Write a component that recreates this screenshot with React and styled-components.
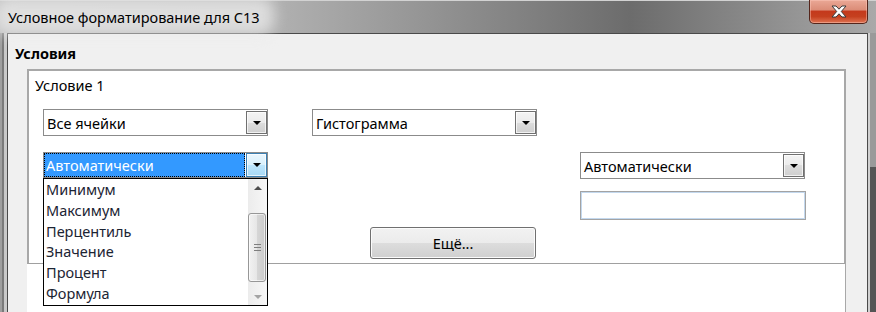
import React from 'react';
import styled, { createGlobalStyle } from 'styled-components';

// GLOBAL
const GlobalStyle = createGlobalStyle`
  html, body {
    margin: 0;
    padding: 0;
    background: #6d6d6d;
  }
  body {
    font-family: "Noto Sans", "Open Sans", sans-serif;
    font-size: 14.5px;
    color: #000;
  }
  * {
    box-sizing: border-box;
  }
`

// WINDOW CHROME
const Window = styled.div`
  width: 876px;
  height: 312px;
  overflow: hidden;
  display: flex;
  flex-direction: column;
`
const TitleBar = styled.div`
  height: 33px;
  flex: none;
  display: flex;
  align-items: flex-start;
  border-top: 1px solid #d2d2d2;
  background: linear-gradient(90deg, #bcbcbc 0%, #b3b3b3 30%, #929292 50%, #6c6c6c 72%, #8a8a8a 86%, #a9a9a9 100%);
`
const Title = styled.div`
  position: relative;
  padding: 6px 0 0 8px;
  line-height: 20px;
  white-space: nowrap;

  &::before {
    content: '';
    position: absolute;
    left: -6px;
    right: -14px;
    top: -4px;
    bottom: -8px;
    background: rgba(235, 235, 235, 0.75);
    border-radius: 14px;
    filter: blur(7px);
  }
  span {
    position: relative;
  }
`
const CloseButton = styled.div`
  width: 59px;
  height: 24px;
  margin: -1px 8px 0 auto;
  display: flex;
  align-items: center;
  justify-content: center;
  border: 1px solid #54251b;
  border-top: none;
  border-radius: 0 0 5px 5px;
  background: linear-gradient(180deg, #eaa896 0%, #dc8d78 42%, #c4391c 50%, #c5401f 72%, #df7352 100%);
  box-shadow: inset 0 0 0 1px rgba(255, 205, 190, 0.45);
`
const FrameRow = styled.div`
  flex: 1;
  display: flex;
  min-height: 0;
`
const LeftFrame = styled.div`
  width: 7px;
  flex: none;
  background: linear-gradient(90deg, #9f9f9f 0, #9f9f9f 2px, #7a7a7a 2px, #7a7a7a 4px, #c8c8c8 4px, #cacaca 100%);
`
const RightFrame = styled.div`
  width: 8px;
  flex: none;
  background:
    linear-gradient(90deg, #d0d0d0 0, #d0d0d0 2px, transparent 2px),
    linear-gradient(180deg, #9a9a9a 0, #9a9a9a 48%, #555 48%, #555 100%);
`
const Body = styled.div`
  flex: 1;
  display: flex;
  flex-direction: column;
  background: #f0f0f0;
  border: 1px solid #4a4a4a;
  border-bottom: none;
  padding: 9px 0 0 7px;
`
const Heading = styled.div`
  font-weight: bold;
  line-height: 20px;
`

// CONDITION PANEL
const Panel = styled.div`
  width: 819px;
  margin: 6px 0 0 12px;
  background: #fff;
  border: 2px solid #a8a8a8;
  border-bottom: 1px solid #a0a0a0;
  padding: 4px 0 4px 6px;
`
const NextPanel = styled.div`
  width: 819px;
  flex: 1;
  margin-left: 12px;
  background: #fff;
  border-right: 1px solid #a8a8a8;
`
const Caption = styled.div`
  line-height: 20px;
`
const Row = styled.div`
  display: flex;
  align-items: flex-start;
  gap: ${p => p.$gap}px;
  padding-left: 8px;
  margin-top: ${p => p.$top}px;
`
const Column = styled.div`
  position: relative;
  width: ${p => p.$width}px;
  margin-left: ${p => p.$left || 0}px;
  padding-top: ${p => p.$top || 0}px;
  display: flex;
  flex-direction: column;
  gap: 12px;
`

// COMBO BOX
const Combo = styled.div`
  width: 225px;
  height: ${p => p.$height || 27}px;
  display: flex;
  align-items: center;
  background: #fff;
  border: 1px solid #8b8b8b;
`
const ComboText = styled.div`
  flex: 1;
  align-self: stretch;
  display: flex;
  align-items: center;
  padding-left: 3px;
  white-space: nowrap;
  ${p => p.$selected && `
    background: #3399ff;
    color: #fff;
    outline: 1px dotted #000;
    outline-offset: -1px;
    padding-left: 2px;
    margin-right: 1px;
  `}
`
const DropButton = styled.div`
  width: 21px;
  height: ${p => (p.$active ? 24 : 23)}px;
  margin-top: ${p => (p.$active ? -1 : 0)}px;
  display: flex;
  align-items: center;
  justify-content: center;
  border: 1px solid ${p => (p.$active ? '#3c7fb1' : '#707070')};
  background: ${p => (p.$active
    ? 'linear-gradient(180deg, #eaf6fd 0%, #d9f0fc 50%, #bee6fd 50%, #a7d9f5 100%)'
    : 'linear-gradient(180deg, #f3f3f3 0%, #ebebeb 50%, #dddddd 50%, #cfcfcf 100%)')};
  box-shadow: inset 0 0 0 1px rgba(255, 255, 255, 0.7);
`
const Arrow = styled.div`
  width: 0;
  height: 0;
  border-left: 4px solid transparent;
  border-right: 4px solid transparent;
  border-top: 4px solid #000;
`

// DROPDOWN LIST
const ListPopup = styled.div`
  position: absolute;
  top: 26px;
  left: 0;
  width: 225px;
  height: 128px;
  display: flex;
  background: #fff;
  border: 1px solid #000;
  z-index: 5;
`
const Items = styled.div`
  flex: 1;
  overflow: hidden;
`
const Item = styled.div`
  height: 20.8px;
  line-height: 20.8px;
  padding-left: 2px;
  color: #1c2433;
  white-space: nowrap;
`
const ScrollBar = styled.div`
  width: 19px;
  display: flex;
  flex-direction: column;
  background: linear-gradient(90deg, #ececec, #f7f7f7);
`
const ScrollArrow = styled.div`
  height: 17px;
  flex: none;
  display: flex;
  align-items: center;
  justify-content: center;

  div {
    width: 0;
    height: 0;
    border-left: 4px solid transparent;
    border-right: 4px solid transparent;
    ${p => (p.$up ? 'border-bottom: 4px solid #4d4d4d;' : 'border-top: 4px solid #a4a4a4;')}
  }
`
const Track = styled.div`
  flex: 1;
  padding: 17px 1px 0 0;
`
const Thumb = styled.div`
  height: 69px;
  border: 1px solid #979797;
  border-radius: 3px;
  background: linear-gradient(90deg, #f2f2f2 0%, #e6e6e6 50%, #d6d6d6 51%, #cbcbcb 100%);
  box-shadow: inset 0 0 0 1px rgba(255, 255, 255, 0.6);
  display: flex;
  flex-direction: column;
  align-items: center;
  justify-content: center;
  gap: 2px;

  span {
    width: 7px;
    height: 1px;
    background: #7e7e7e;
  }
`

// OTHER CONTROLS
const TextInput = styled.div`
  width: 226px;
  height: 29px;
  background: #fff;
  border: 1px solid #a3a3a3;
  box-shadow: inset 0 0 0 1px #c3d8ee;
`
const Button = styled.div`
  width: 166px;
  height: 32px;
  display: flex;
  align-items: center;
  justify-content: center;
  border: 1px solid #707070;
  border-radius: 3px;
  background: linear-gradient(180deg, #f2f2f2 0%, #ebebeb 50%, #dddddd 50%, #cfcfcf 100%);
  box-shadow: inset 0 0 0 1px #fbfbfb;
`

const CloseIcon = () => (
  <svg width="16" height="13" viewBox="0 0 16 13">
    <path
      d="M1 1 H5 L8 4.2 L11 1 H15 L10.3 6.5 L15 12 H11 L8 8.8 L5 12 H1 L5.7 6.5 Z"
      fill="#fff"
      stroke="#3b3b3b"
      strokeWidth="1"
      strokeLinejoin="round"
    />
  </svg>
)

const ComboBox = ({ text, selected, height }) => (
  <Combo $height={height}>
    <ComboText $selected={selected}>{text}</ComboText>
    <DropButton $active={selected}><Arrow /></DropButton>
  </Combo>
)

const options = ['Минимум', 'Максимум', 'Перцентиль', 'Значение', 'Процент', 'Формула'];

export default function App() {
  return (
    <>
      <GlobalStyle />
      <Window>
        <TitleBar>
          <Title><span>Условное форматирование для C13</span></Title>
          <CloseButton><CloseIcon /></CloseButton>
        </TitleBar>
        <FrameRow>
          <LeftFrame />
          <Body>
            <Heading>Условия</Heading>
            <Panel>
              <Caption>Условие 1</Caption>
              <Row $top={14} $gap={44}>
                <ComboBox text="Все ячейки" />
                <ComboBox text="Гистограмма" />
              </Row>
              <Row $top={16} $gap={0}>
                <Column $width={225}>
                  <ComboBox text="Автоматически" selected height={26} />
                  <ListPopup>
                    <Items>
                      {options.map(o => <Item key={o}>{o}</Item>)}
                    </Items>
                    <ScrollBar>
                      <ScrollArrow $up><div /></ScrollArrow>
                      <Track>
                        <Thumb><span /><span /><span /></Thumb>
                      </Track>
                      <ScrollArrow><div /></ScrollArrow>
                    </ScrollBar>
                  </ListPopup>
                </Column>
                <Column $width={166} $left={102} $top={75}>
                  <Button>Ещё...</Button>
                </Column>
                <Column $width={226} $left={44}>
                  <ComboBox text="Автоматически" />
                  <TextInput />
                </Column>
              </Row>
            </Panel>
            <NextPanel />
          </Body>
          <RightFrame />
        </FrameRow>
      </Window>
    </>
  );
}
